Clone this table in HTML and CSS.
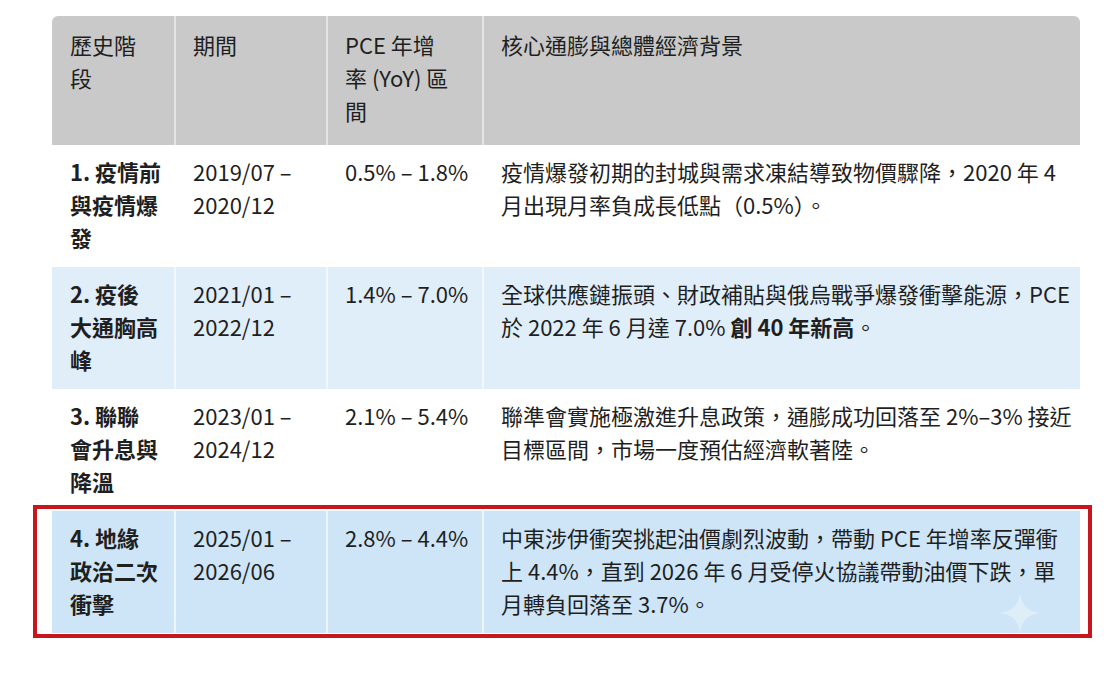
FILE: index.html
```html
<!DOCTYPE html>
<html lang="zh-Hant">
<head>
<meta charset="utf-8">
<title>PCE 歷史階段</title>
<link rel="stylesheet" href="styles.css">
</head>
<body>
<div class="table">
  <div class="row head">
    <div class="cell">歷史階<br>段</div>
    <div class="cell">期間</div>
    <div class="cell">PCE 年增<br>率 (YoY) 區<br>間</div>
    <div class="cell">核心通膨與總體經濟背景</div>
  </div>
  <div class="row">
    <div class="cell stage">1. 疫情前<br>與疫情爆<br>發</div>
    <div class="cell">2019/07 –<br>2020/12</div>
    <div class="cell">0.5% – 1.8%</div>
    <div class="cell">疫情爆發初期的封城與需求凍結導致物價驟降，2020 年 4 月出現月率負成長低點（0.5%）。</div>
  </div>
  <div class="row blue">
    <div class="cell stage">2. 疫後<br>大通胸高<br>峰</div>
    <div class="cell">2021/01 –<br>2022/12</div>
    <div class="cell">1.4% – 7.0%</div>
    <div class="cell">全球供應鏈振頭、財政補貼與俄烏戰爭爆發衝擊能源，PCE 於 2022 年 6 月達 7.0% <strong>創 40 年新高</strong>。</div>
  </div>
  <div class="row before-mark">
    <div class="cell stage">3. 聯聯<br>會升息與<br>降溫</div>
    <div class="cell">2023/01 –<br>2024/12</div>
    <div class="cell">2.1% – 5.4%</div>
    <div class="cell">聯準會實施極激進升息政策，通膨成功回落至 2%–3% 接近目標區間，市場一度預估經濟軟著陸。</div>
  </div>
  <div class="mark">
    <div class="row blue strong-blue">
      <div class="cell stage">4. 地緣<br>政治二次<br>衝擊</div>
      <div class="cell">2025/01 –<br>2026/06</div>
      <div class="cell">2.8% – 4.4%</div>
      <div class="cell">中東涉伊衝突挑起油價劇烈波動，帶動 PCE 年增率反彈衝上 4.4%，直到 2026 年 6 月受停火協議帶動油價下跌，單月轉負回落至 3.7%。</div>
      <svg class="sparkle" viewBox="0 0 40 40" width="40" height="40" aria-hidden="true">
        <path d="M20 0 Q22 18 40 20 Q22 22 20 40 Q18 22 0 20 Q18 18 20 0 Z"/>
      </svg>
    </div>
  </div>
</div>
</body>
</html>
```

FILE: styles.css
```css
html, body {
  margin: 0;
  padding: 0;
  background: #ffffff;
}

body {
  font-family: "Noto Sans CJK TC", "Noto Sans", sans-serif;
  font-size: 22px;
  line-height: 33px;
  color: #1f1f1f;
}

.table {
  width: 1028px;
  margin: 16px 0 0 52px;
}

.row {
  display: grid;
  grid-template-columns: 122px 152px 156px 598px;
  position: relative;
}

.cell {
  padding: 10px 6px 13px 17px;
  border-left: 2px solid transparent;
}

.cell:first-child {
  border-left: 0;
  padding-left: 18px;
}

.head .cell {
  background: #c9c9c9;
  padding-top: 12px;
  padding-bottom: 18px;
  border-left-color: #e4e4e4;
}

.head .cell:first-child {
  border-top-left-radius: 6px;
}

.head .cell:last-child {
  border-top-right-radius: 6px;
}

.blue .cell {
  background: #e0eefa;
  border-left-color: #f2f7fc;
}

.strong-blue .cell {
  background: #cde5f7;
  border-left-color: #eef5fb;
}

.before-mark .cell {
  padding-bottom: 7px;
}

.stage {
  font-weight: 700;
}

strong {
  font-weight: 700;
}

.mark {
  margin-left: -19px;
  margin-right: -12px;
  border: 4px solid #c6161e;
  padding: 2px 8px 1px 15px;
}

.sparkle {
  position: absolute;
  right: 40px;
  bottom: 0;
  fill: #ffffff;
  opacity: 0.35;
}
```
